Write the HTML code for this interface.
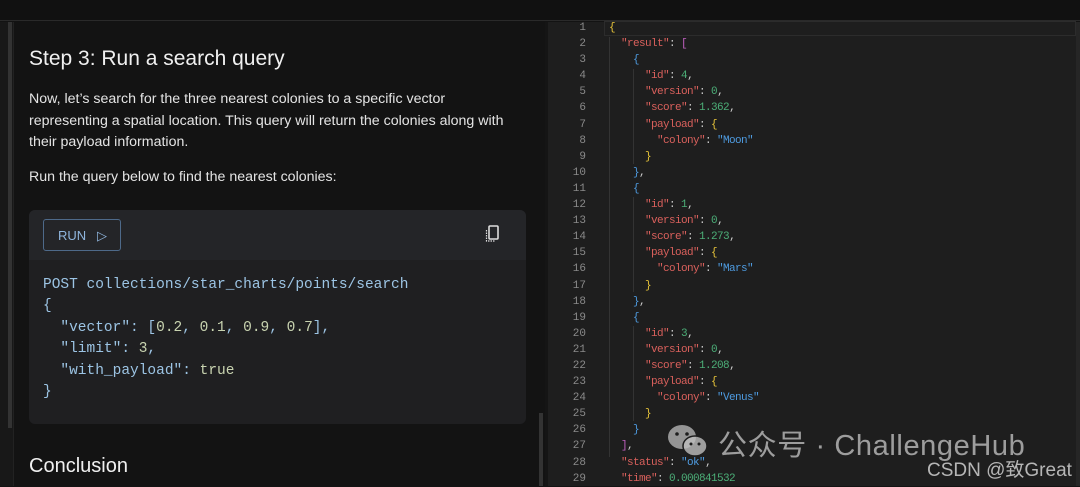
<!DOCTYPE html>
<html><head><meta charset="utf-8"><style>
*{margin:0;padding:0;box-sizing:border-box}
body{width:1080px;height:486px;overflow:hidden;background:#131313;font-family:"Liberation Sans",sans-serif;position:relative}
.top{position:absolute;left:0;top:0;width:1080px;height:21px;background:#111;border-bottom:1px solid #2a2a2a}
.lstrip{position:absolute;left:0;top:22px;width:14px;height:464px;background:#181818;border-right:1px solid #222}
.lsb{position:absolute;left:8px;top:22px;width:4px;height:406px;background:#333}
.left{position:absolute;left:14px;top:22px;width:531px;height:464px;background:#131313}
.rsb{position:absolute;left:539px;top:413px;width:4px;height:73px;background:#333}
h2{position:absolute;left:29px;font-weight:400;color:#f0f0f0;font-size:21px}
p{position:absolute;left:29px;color:#e4e4e4;font-size:14.2px;line-height:21.5px;white-space:nowrap}
.code{position:absolute;left:29px;top:210px;width:497px;height:214px;background:#1f1f21;border-radius:6px;overflow:hidden}
.ch{height:50px;background:#242528}
.run{position:absolute;left:14px;top:9px;width:78px;height:32px;border:1px solid #4e6a8a;border-radius:3px;color:#8fb5dd;font-size:13px;padding:8px 0 0 14px}
pre{position:absolute;left:14px;top:65px;font-family:"Liberation Mono",monospace;font-size:14.5px;line-height:21.4px;color:#9cc4e4}
pre .n{color:#c8d3b0}
.ed{position:absolute;left:548px;top:22px;width:532px;height:464px;background:#1e1e1e}
.split{position:absolute;left:545px;top:22px;width:3px;height:464px;background:#151515}
.ln{position:absolute;left:548px;top:20px;width:38px;text-align:right;font-family:"Liberation Mono",monospace;font-size:11px;line-height:16.1px;color:#8a8a8a}
.js{position:absolute;left:609px;top:20px;font-family:"Liberation Mono",monospace;font-size:11px;letter-spacing:-0.6px;line-height:16.1px;color:#ccc;white-space:pre}
.k{color:#d9605c}.s{color:#4e9be0}.v{color:#4caf78}.y{color:#e8c53a}.b{color:#4e9be0}.m{color:#c060c0}
.cur{position:absolute;left:604px;top:21px;width:472px;height:15px;border:1px solid #2c2c2c}
.guide{position:absolute;width:1px;background:#333}
.wm{position:absolute;top:422px;font-size:29px;color:rgba(200,200,200,.75);font-family:"Liberation Sans","Noto Sans CJK SC",sans-serif;letter-spacing:.6px}
.csdn{position:absolute;left:927px;top:455px;font-size:19px;color:rgba(220,220,220,.8);font-family:"Liberation Sans","Noto Sans CJK SC",sans-serif}
</style></head><body>
<div class="top"></div>
<div class="lstrip"></div><div class="lsb"></div>
<div class="left"></div>
<h2 style="top:47px">Step 3: Run a search query</h2>
<p style="top:89px">Now, let’s search for the three nearest colonies to a specific vector<br>representing a spatial location. This query will return the colonies along with<br>their payload information.</p>
<p style="top:167px">Run the query below to find the nearest colonies:</p>
<div class="code"><div class="ch"></div>
<div class="run">RUN &nbsp;&nbsp;▷</div>
<svg style="position:absolute;left:456px;top:15px" width="16" height="18" viewBox="0 0 16 18"><rect x="4" y="1" width="9" height="13" rx="1" fill="none" stroke="#ddd" stroke-width="1.6"/><path d="M1.5 5v11h9" fill="none" stroke="#ddd" stroke-width="1.2" stroke-dasharray="1.5 1"/></svg>
<pre>POST collections/star_charts/points/search
{
  "vector": [<span class="n">0.2</span>, <span class="n">0.1</span>, <span class="n">0.9</span>, <span class="n">0.7</span>],
  "limit": <span class="n">3</span>,
  "with_payload": <span class="n">true</span>
}</pre></div>
<h2 style="top:455px;font-size:20px">Conclusion</h2>
<div class="rsb"></div>
<div class="split"></div>
<div style="position:absolute;left:548px;top:313px;color:#888;font-size:10px;line-height:4px">·<br>·<br>·</div>
<div class="ed"></div>
<div class="cur"></div>
<div class="guide" style="left:609px;top:37px;height:420px"></div>
<div class="guide" style="left:633px;top:69px;height:95px"></div>
<div class="guide" style="left:633px;top:197px;height:95px"></div>
<div class="guide" style="left:633px;top:326px;height:95px"></div>
<div style="position:absolute;left:1076px;top:22px;width:4px;height:464px;background:#262626"></div>
<div class="ln">1<br>2<br>3<br>4<br>5<br>6<br>7<br>8<br>9<br>10<br>11<br>12<br>13<br>14<br>15<br>16<br>17<br>18<br>19<br>20<br>21<br>22<br>23<br>24<br>25<br>26<br>27<br>28<br>29</div>
<div class="js"><span class="y">{</span>
  <span class="k">"result"</span>: <span class="m">[</span>
    <span class="b">{</span>
      <span class="k">"id"</span>: <span class="v">4</span>,
      <span class="k">"version"</span>: <span class="v">0</span>,
      <span class="k">"score"</span>: <span class="v">1.362</span>,
      <span class="k">"payload"</span>: <span class="y">{</span>
        <span class="k">"colony"</span>: <span class="s">"Moon"</span>
      <span class="y">}</span>
    <span class="b">}</span>,
    <span class="b">{</span>
      <span class="k">"id"</span>: <span class="v">1</span>,
      <span class="k">"version"</span>: <span class="v">0</span>,
      <span class="k">"score"</span>: <span class="v">1.273</span>,
      <span class="k">"payload"</span>: <span class="y">{</span>
        <span class="k">"colony"</span>: <span class="s">"Mars"</span>
      <span class="y">}</span>
    <span class="b">}</span>,
    <span class="b">{</span>
      <span class="k">"id"</span>: <span class="v">3</span>,
      <span class="k">"version"</span>: <span class="v">0</span>,
      <span class="k">"score"</span>: <span class="v">1.208</span>,
      <span class="k">"payload"</span>: <span class="y">{</span>
        <span class="k">"colony"</span>: <span class="s">"Venus"</span>
      <span class="y">}</span>
    <span class="b">}</span>
  <span class="m">]</span>,
  <span class="k">"status"</span>: <span class="s">"ok"</span>,
  <span class="k">"time"</span>: <span class="v">0.000841532</span></div>
<svg style="position:absolute;left:667px;top:423px" width="44" height="36" viewBox="0 0 44 36"><ellipse cx="15" cy="14" rx="14" ry="12" fill="rgba(200,200,200,.7)"/><ellipse cx="28" cy="23" rx="12" ry="10" fill="rgba(190,190,190,.8)" stroke="#1e1e1e" stroke-width="1.5"/><circle cx="10" cy="11" r="1.8" fill="#1e1e1e"/><circle cx="20" cy="11" r="1.8" fill="#1e1e1e"/><circle cx="24" cy="21" r="1.5" fill="#1e1e1e"/><circle cx="32" cy="21" r="1.5" fill="#1e1e1e"/></svg>
<div class="wm" style="left:718px">公众号 · ChallengeHub</div>
<div class="csdn">CSDN @致Great</div>
</body></html>
